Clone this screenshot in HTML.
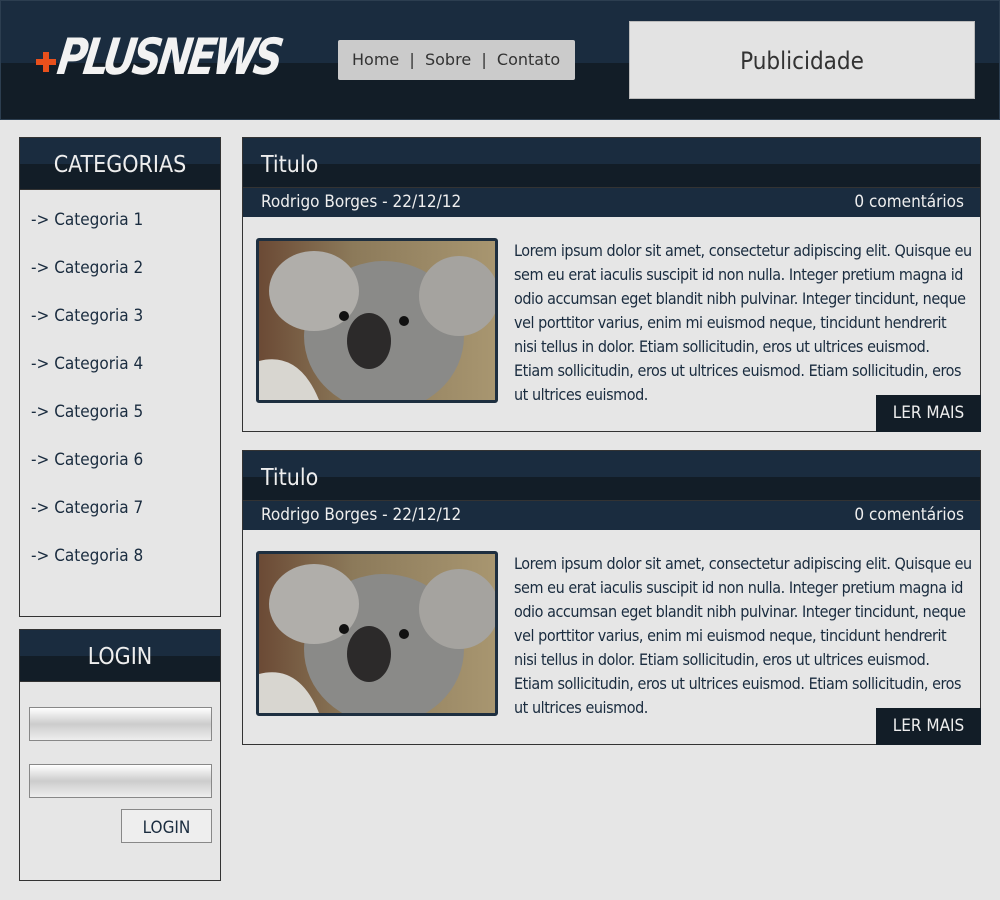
<!DOCTYPE html>
<html><head><style>
*{margin:0;padding:0;box-sizing:border-box}
body{width:1000px;height:900px;background:#e6e6e6;font-family:"DejaVu Sans Condensed","DejaVu Sans",sans-serif;font-stretch:condensed;position:relative;overflow:hidden;color:#1a2c3f}
.abs{position:absolute}
.hdr{left:0;top:0;width:1000px;height:120px;border:1px solid #2c3e50;background:linear-gradient(#1a2c3f 0,#1a2c3f 62px,#121d27 62px)}
.logo{left:58px;top:28px;font:italic bold 50px "DejaVu Sans Condensed",sans-serif;color:#f2f2f2;letter-spacing:-4px;transform:skewX(-8deg) scaleX(0.9);transform-origin:left;font-stretch:condensed}
.plus{left:36px;top:52px;width:20px;height:20px}
.nav{left:338px;top:40px;width:237px;height:40px;background:#cbcbcb;border-radius:2px;font:16px "DejaVu Sans",sans-serif;font-stretch:normal;color:#333;line-height:40px;padding-left:14px;white-space:pre}
.pub{left:629px;top:21px;width:346px;height:78px;background:#e3e3e3;border:1px solid #bbb;text-align:center;line-height:78px;font-size:24px;color:#333}
.box{border:1px solid #333;background:#e6e6e6}
.bh{background:linear-gradient(#1a2c3f 0,#1a2c3f 26px,#121d27 26px);color:#eee;height:52px;line-height:55px;font-size:23px;text-align:center;border-bottom:1px solid #333}
.cat{position:absolute;left:11px;font-size:17px;color:#1a2c3f}
.inp{left:9px;width:183px;height:34px;border:1px solid #888;background:linear-gradient(#fff,#ccc 50%,#eee)}
.card .bh{text-align:left;padding-left:18px;height:50px;line-height:55px}
.meta{height:29px;background:#1a2c3f;color:#eee;font-size:17px;line-height:29px;padding:0 16px 0 18px;display:flex;justify-content:space-between}
.txt{position:absolute;left:271px;top:22px;width:470px;white-space:nowrap;font-size:16px;letter-spacing:-0.45px;line-height:24px;color:#1a2c3f}
.ler{position:absolute;right:-1px;bottom:-1px;width:105px;height:37px;background:#121d27;color:#eee;font-size:17px;text-align:center;line-height:37px}
.img{position:absolute;left:13px;top:21px;width:242px;height:165px;border:3px solid #1e2f40;border-radius:3px;overflow:hidden;background:linear-gradient(90deg,#6b4a35,#8c7a5a 40%,#a89670)}
</style></head><body>
<div class="abs hdr"></div>
<svg class="abs plus" viewBox="0 0 20 20"><path d="M7 0h6v7h7v6h-7v7h-6v-7h-7v-6h7z" fill="#e8501c"/></svg>
<div class="abs logo">PLUSNEWS</div>
<div class="abs nav">Home  |  Sobre  |  Contato</div>
<div class="abs pub">Publicidade</div>

<div class="abs box" style="left:19px;top:137px;width:202px;height:480px">
<div class="bh">CATEGORIAS</div>
<div class="cat" style="top:72px">-&gt; Categoria 1</div>
<div class="cat" style="top:120px">-&gt; Categoria 2</div>
<div class="cat" style="top:168px">-&gt; Categoria 3</div>
<div class="cat" style="top:216px">-&gt; Categoria 4</div>
<div class="cat" style="top:264px">-&gt; Categoria 5</div>
<div class="cat" style="top:312px">-&gt; Categoria 6</div>
<div class="cat" style="top:360px">-&gt; Categoria 7</div>
<div class="cat" style="top:408px">-&gt; Categoria 8</div>
</div>
<div class="abs box" style="left:19px;top:629px;width:202px;height:252px">
<div class="bh">LOGIN</div>
<div class="abs inp" style="top:77px"></div>
<div class="abs inp" style="top:134px"></div>
<div class="abs" style="left:101px;top:179px;width:91px;height:34px;border:1px solid #888;background:#eee;text-align:center;line-height:36px;font-size:17px">LOGIN</div>
</div>

<div class="abs box card" style="left:242px;top:137px;width:739px;height:295px">
<div class="bh">Titulo</div>
<div class="meta"><span>Rodrigo Borges - 22/12/12</span><span>0 comentários</span></div>
<div style="position:relative">
<div class="img"><svg width="236" height="159" viewBox="0 0 236 159"><ellipse cx="125" cy="95" rx="80" ry="75" fill="#8a8a88"/><ellipse cx="55" cy="50" rx="45" ry="40" fill="#b0aeaa"/><ellipse cx="200" cy="55" rx="40" ry="40" fill="#a5a39f"/><ellipse cx="110" cy="100" rx="22" ry="28" fill="#2c2a2a"/><circle cx="85" cy="75" r="5" fill="#111"/><circle cx="145" cy="80" r="5" fill="#111"/><path d="M0 120 Q40 110 60 159 H0z" fill="#d8d6d0"/></svg></div>
<div class="txt">Lorem ipsum dolor sit amet, consectetur adipiscing elit. Quisque eu<br>sem eu erat iaculis suscipit id non nulla. Integer pretium magna id<br>odio accumsan eget blandit nibh pulvinar. Integer tincidunt, neque<br>vel porttitor varius, enim mi euismod neque, tincidunt hendrerit<br>nisi tellus in dolor. Etiam sollicitudin, eros ut ultrices euismod.<br>Etiam sollicitudin, eros ut ultrices euismod. Etiam sollicitudin, eros<br>ut ultrices euismod.</div>
</div>
<div class="ler">LER MAIS</div>
</div>

<div class="abs box card" style="left:242px;top:450px;width:739px;height:295px">
<div class="bh">Titulo</div>
<div class="meta"><span>Rodrigo Borges - 22/12/12</span><span>0 comentários</span></div>
<div style="position:relative">
<div class="img"><svg width="236" height="159" viewBox="0 0 236 159"><ellipse cx="125" cy="95" rx="80" ry="75" fill="#8a8a88"/><ellipse cx="55" cy="50" rx="45" ry="40" fill="#b0aeaa"/><ellipse cx="200" cy="55" rx="40" ry="40" fill="#a5a39f"/><ellipse cx="110" cy="100" rx="22" ry="28" fill="#2c2a2a"/><circle cx="85" cy="75" r="5" fill="#111"/><circle cx="145" cy="80" r="5" fill="#111"/><path d="M0 120 Q40 110 60 159 H0z" fill="#d8d6d0"/></svg></div>
<div class="txt">Lorem ipsum dolor sit amet, consectetur adipiscing elit. Quisque eu<br>sem eu erat iaculis suscipit id non nulla. Integer pretium magna id<br>odio accumsan eget blandit nibh pulvinar. Integer tincidunt, neque<br>vel porttitor varius, enim mi euismod neque, tincidunt hendrerit<br>nisi tellus in dolor. Etiam sollicitudin, eros ut ultrices euismod.<br>Etiam sollicitudin, eros ut ultrices euismod. Etiam sollicitudin, eros<br>ut ultrices euismod.</div>
</div>
<div class="ler">LER MAIS</div>
</div>
</body></html>
